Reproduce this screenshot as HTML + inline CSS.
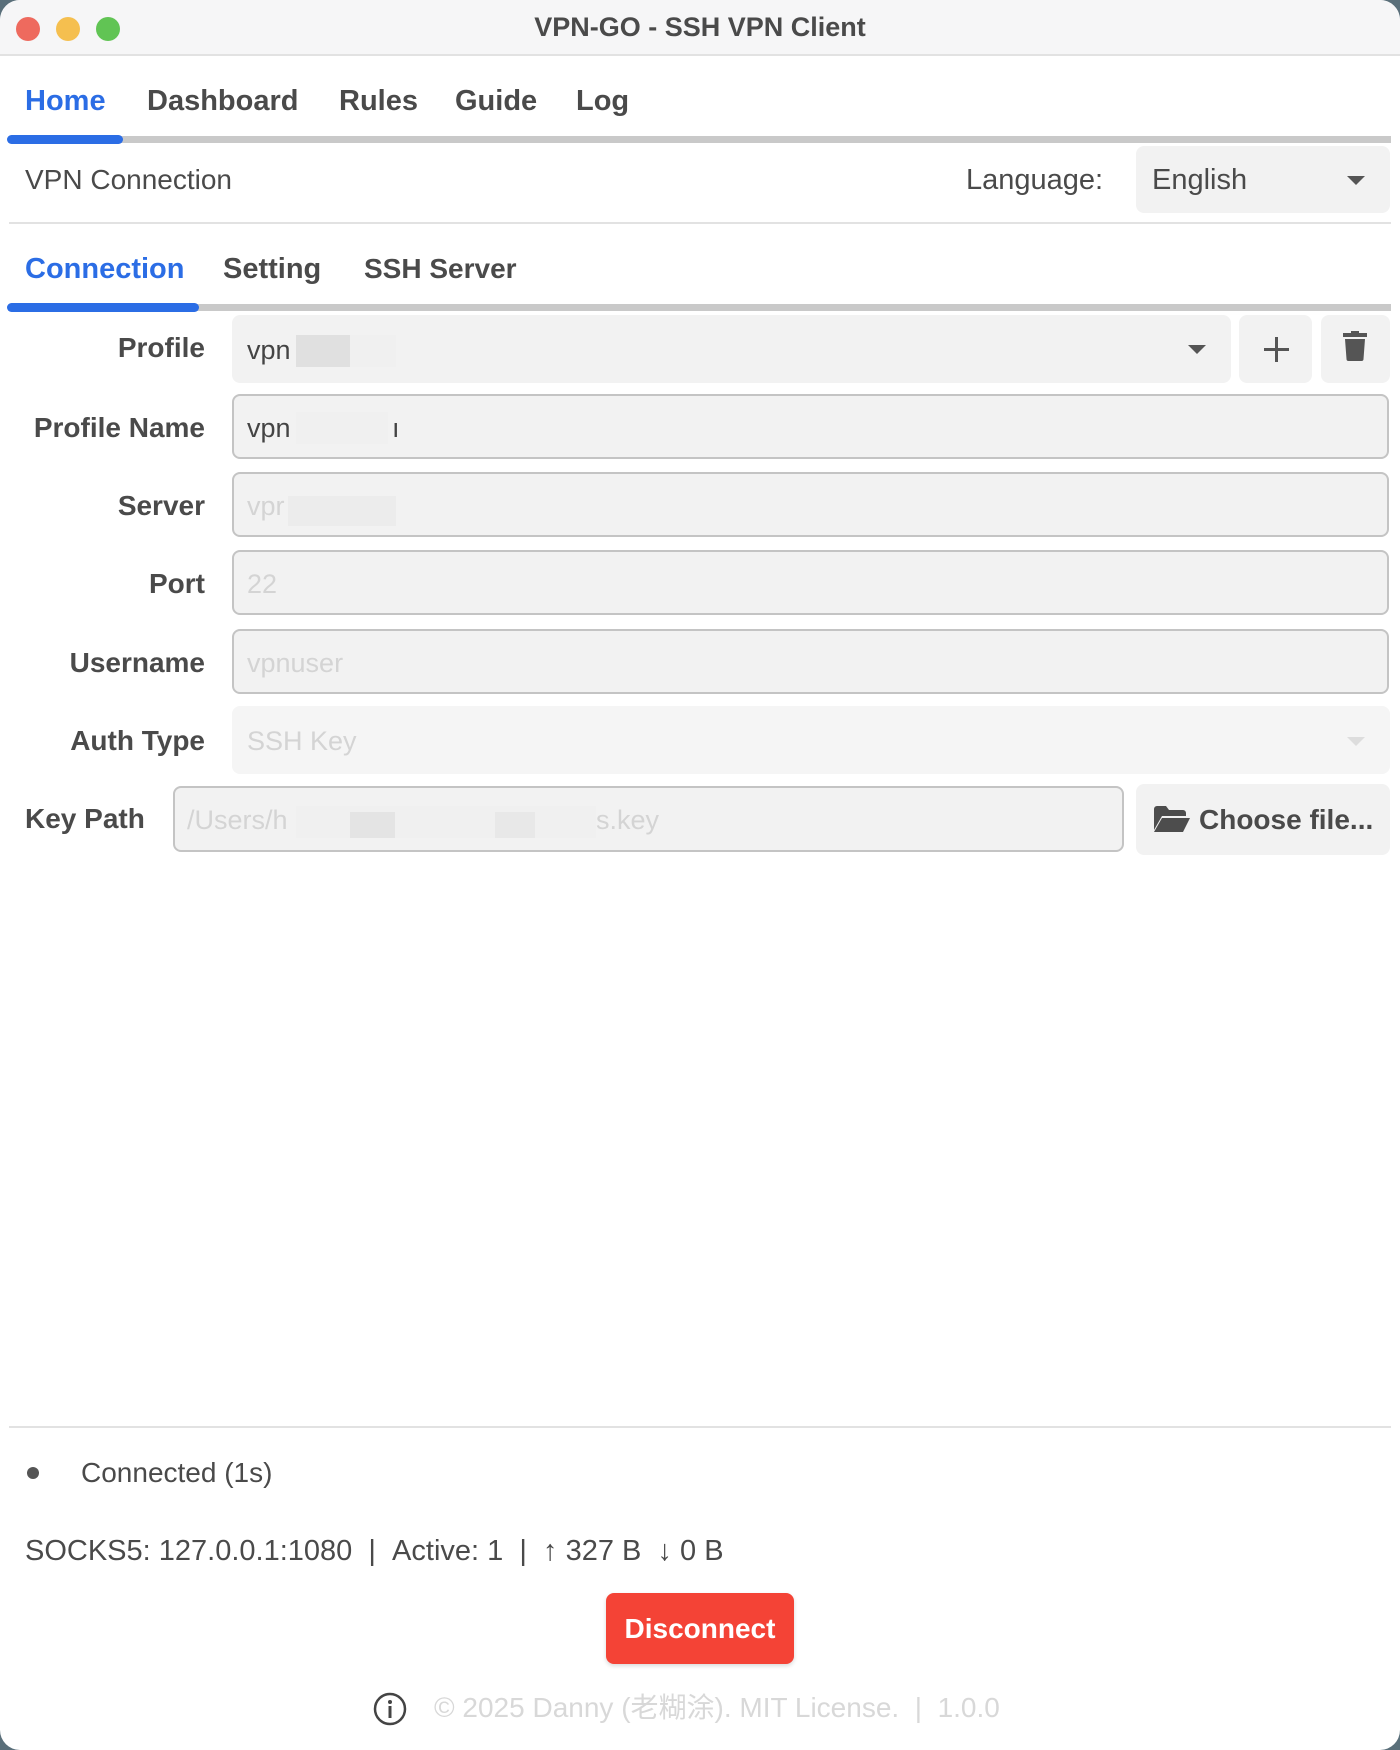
<!DOCTYPE html>
<html><head><meta charset="utf-8"><style>
*{margin:0;padding:0;box-sizing:border-box}
html,body{width:1400px;height:1750px;overflow:hidden;background:#5a6f7a}
#win{position:absolute;left:0;top:0;width:1400px;height:1750px;background:#fff;border-radius:20px;overflow:hidden;font-family:"Liberation Sans","Noto Sans CJK SC",sans-serif;color:#4a4a4a}
.a{position:absolute;white-space:nowrap}
.t{position:absolute;white-space:nowrap;height:40px;line-height:40px}
.b{font-weight:bold}
.box{position:absolute;background:#f2f2f2;border-radius:8px}
.inp{position:absolute;background:#f2f2f2;border:2px solid #c4c4c4;border-radius:8px}
.lab{position:absolute;right:1195px;font-weight:bold;font-size:28px;height:40px;line-height:40px;white-space:nowrap;color:#4a4a4a}
.val{font-size:27px;color:#444}
.ph{font-size:27px;color:#d4d4d4}
.blur{position:absolute;background:#e6e6e6}
</style></head><body><div id="win">
<div class="a" style="left:0;top:0;width:1400px;height:56px;background:#f6f6f7;border-bottom:2px solid #e2e2e2"></div>
<div class="a" style="left:16px;top:17px;width:24px;height:24px;border-radius:50%;background:#ee6a5e"></div>
<div class="a" style="left:56px;top:17px;width:24px;height:24px;border-radius:50%;background:#f5bf4f"></div>
<div class="a" style="left:96px;top:17px;width:24px;height:24px;border-radius:50%;background:#61c454"></div>
<div class="t b" style="left:0;width:1400px;text-align:center;top:7px;font-size:27px;color:#4a4a4a">VPN-GO - SSH VPN Client</div>
<div class="t b" style="left:25px;top:81px;font-size:29px;color:#2b6de5">Home</div>
<div class="t b" style="left:147px;top:81px;font-size:29px">Dashboard</div>
<div class="t b" style="left:339px;top:81px;font-size:29px">Rules</div>
<div class="t b" style="left:455px;top:81px;font-size:29px">Guide</div>
<div class="t b" style="left:576px;top:81px;font-size:29px">Log</div>
<div class="a" style="left:9px;top:136px;width:1382px;height:7px;background:#c9c9c9"></div>
<div class="a" style="left:7px;top:135px;width:116px;height:9px;background:#2b6de5;border-radius:5px"></div>
<div class="t" style="left:25px;top:160px;font-size:28px">VPN Connection</div>
<div class="t" style="left:966px;top:160px;font-size:29px">Language:</div>
<div class="box" style="left:1136px;top:146px;width:254px;height:67px"></div>
<div class="t" style="left:1152px;top:160px;font-size:29px">English</div>
<div class="a" style="left:1347px;top:176px;border-left:9px solid transparent;border-right:9px solid transparent;border-top:9px solid #555"></div>
<div class="a" style="left:9px;top:222px;width:1382px;height:2px;background:#e2e2e2"></div>
<div class="t b" style="left:25px;top:249px;font-size:29px;color:#2b6de5">Connection</div>
<div class="t b" style="left:223px;top:249px;font-size:29px">Setting</div>
<div class="t b" style="left:364px;top:249px;font-size:28px">SSH Server</div>
<div class="a" style="left:9px;top:304px;width:1382px;height:7px;background:#c9c9c9"></div>
<div class="a" style="left:7px;top:303px;width:192px;height:9px;background:#2b6de5;border-radius:5px"></div>
<div class="lab" style="top:328px">Profile</div>
<div class="box" style="left:232px;top:315px;width:999px;height:68px"></div>
<div class="t val" style="left:247px;top:330px">vpn</div>
<div class="blur" style="left:296px;top:335px;width:54px;height:32px;background:#e0e0e0"></div>
<div class="blur" style="left:350px;top:335px;width:46px;height:32px;background:#f0f0f0"></div>
<div class="a" style="left:1188px;top:345px;border-left:9px solid transparent;border-right:9px solid transparent;border-top:9px solid #555"></div>
<div class="box" style="left:1239px;top:315px;width:73px;height:68px"></div>
<div class="a" style="left:1264px;top:348px;width:25px;height:3px;background:#555"></div>
<div class="a" style="left:1275px;top:337px;width:3px;height:25px;background:#555"></div>
<div class="box" style="left:1321px;top:315px;width:69px;height:68px"></div>
<svg class="a" style="left:1343px;top:331px" width="24" height="30" viewBox="0 0 24 30"><rect x="0" y="2" width="24" height="4" fill="#555"/><rect x="8" y="0" width="8" height="3" fill="#555"/><path d="M2 8h20l-1.5 20a2 2 0 0 1-2 2h-13a2 2 0 0 1-2-2z" fill="#555"/></svg>
<div class="lab" style="top:408px">Profile Name</div>
<div class="inp" style="left:232px;top:394px;width:1157px;height:65px"></div>
<div class="t val" style="left:247px;top:408px">vpn</div>
<div class="blur" style="left:296px;top:412px;width:92px;height:32px;background:#f0f0f0"></div>
<div class="t val" style="left:392px;top:408px">ı</div>
<div class="lab" style="top:486px">Server</div>
<div class="inp" style="left:232px;top:472px;width:1157px;height:65px"></div>
<div class="t ph" style="left:247px;top:486px">vpr</div>
<div class="blur" style="left:288px;top:496px;width:108px;height:30px;background:#ececec"></div>
<div class="lab" style="top:564px">Port</div>
<div class="inp" style="left:232px;top:550px;width:1157px;height:65px"></div>
<div class="t ph" style="left:247px;top:564px">22</div>
<div class="lab" style="top:643px">Username</div>
<div class="inp" style="left:232px;top:629px;width:1157px;height:65px"></div>
<div class="t ph" style="left:247px;top:643px">vpnuser</div>
<div class="lab" style="top:721px">Auth Type</div>
<div class="box" style="left:232px;top:706px;width:1158px;height:68px;background:#f5f5f5"></div>
<div class="t ph" style="left:247px;top:721px">SSH Key</div>
<div class="a" style="left:1347px;top:737px;border-left:9px solid transparent;border-right:9px solid transparent;border-top:9px solid #ddd"></div>
<div class="t b" style="left:25px;top:799px;font-size:28px">Key Path</div>
<div class="inp" style="left:173px;top:786px;width:951px;height:66px"></div>
<div class="t ph" style="left:187px;top:800px">/Users/h</div>
<div class="blur" style="left:296px;top:806px;width:150px;height:32px;background:#f0f0f0"></div>
<div class="blur" style="left:350px;top:812px;width:45px;height:26px;background:#e4e4e4"></div>
<div class="blur" style="left:446px;top:806px;width:150px;height:32px;background:#f0f0f0"></div>
<div class="blur" style="left:495px;top:812px;width:40px;height:26px;background:#e8e8e8"></div>
<div class="t ph" style="left:596px;top:800px">s.key</div>
<div class="box" style="left:1136px;top:784px;width:254px;height:71px"></div>
<svg class="a" style="left:1154px;top:806px" width="36" height="26" viewBox="0 0 36 26"><path d="M0 3a3 3 0 0 1 3-3h9l3 4h14a3 3 0 0 1 3 3v3H8L0 24z" fill="#4d4d4d"/><path d="M8 12h28l-7 14H0z" fill="#4d4d4d"/></svg>
<div class="t b" style="left:1199px;top:800px;font-size:28px">Choose file...</div>
<div class="a" style="left:9px;top:1426px;width:1382px;height:2px;background:#e2e2e2"></div>
<div class="a" style="left:27px;top:1467px;width:12px;height:12px;border-radius:50%;background:#555"></div>
<div class="t" style="left:81px;top:1453px;font-size:28px">Connected (1s)</div>
<div class="t" style="left:25px;top:1531px;font-size:29px">SOCKS5: 127.0.0.1:1080 &nbsp;| &nbsp;Active: 1 &nbsp;| &nbsp;↑ 327 B &nbsp;↓ 0 B</div>
<div class="a" style="left:606px;top:1593px;width:188px;height:71px;background:#f44336;border-radius:8px;box-shadow:0 2px 4px rgba(0,0,0,.15)"></div>
<div class="t b" style="left:606px;width:188px;text-align:center;top:1609px;font-size:28px;color:#fff">Disconnect</div>
<svg class="a" style="left:373px;top:1692px" width="34" height="34" viewBox="0 0 34 34"><circle cx="17" cy="17" r="15" fill="none" stroke="#444" stroke-width="2.5"/><circle cx="17" cy="10" r="2" fill="#444"/><rect x="15.5" y="14" width="3" height="12" fill="#444"/></svg>
<div class="t" style="left:434px;top:1688px;font-size:28px;color:#d8d8d8">© 2025 Danny (老糊涂). MIT License. &nbsp;| &nbsp;1.0.0</div>
</div></body></html>
